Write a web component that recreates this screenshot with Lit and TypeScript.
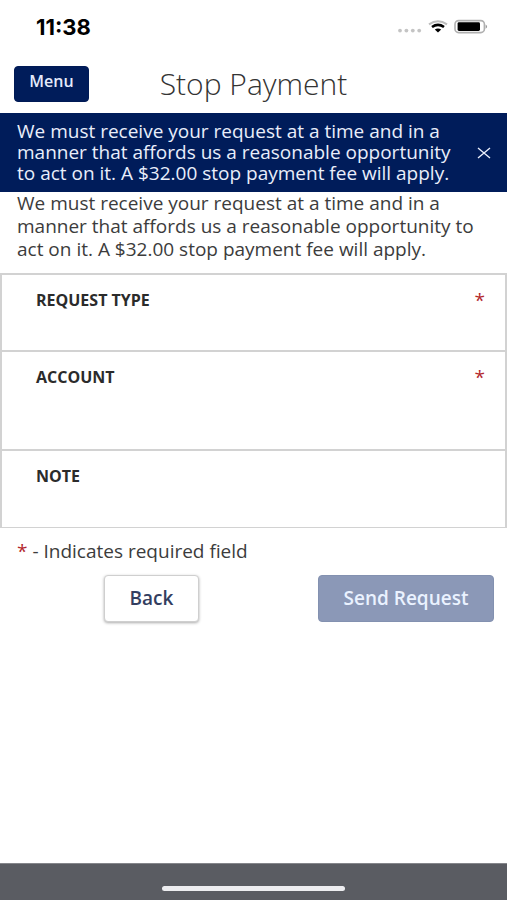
import { LitElement, html, css, nothing } from "lit";
import { customElement, property, state } from "lit/decorators.js";

@customElement("status-bar")
export class StatusBar extends LitElement {
  static styles = css`
    :host {
      display: flex;
      justify-content: space-between;
      align-items: center;
      height: 54px;
      padding: 0 18px 0 36px;
      box-sizing: border-box;
      color: #000;
    }
    .time {
      font: 700 22px/24px Inter, sans-serif;
    }
    .icons {
      display: flex;
      align-items: center;
    }
  `;

  render() {
    return html`
      <span class="time">11:38</span>
      <span class="icons">
        <svg width="92" height="18" viewBox="0 0 92 18" role="img" aria-label="Wi-Fi connected, battery full">
          <g fill="#c4c4c4">
            <circle cx="3" cy="12.6" r="1.9" />
            <circle cx="9.4" cy="12.6" r="1.9" />
            <circle cx="15.8" cy="12.6" r="1.9" />
            <circle cx="22.2" cy="12.6" r="1.9" />
          </g>
          <path d="M32 6.4 Q41 0 50 6.4" fill="none" stroke="#bdbdbd" stroke-width="2" />
          <path d="M35 9 Q41 4.6 47 9" fill="none" stroke="#000" stroke-width="2.6" />
          <path d="M37.8 11.6 Q41 9.6 44.2 11.6 L41 14.6 Z" fill="#000" />
          <rect x="58" y="2.6" width="29.4" height="12" rx="3.6" fill="#fff" stroke="#b0b0b0" stroke-width="1.6" />
          <rect x="60.6" y="4.2" width="22.4" height="8.8" rx="1.4" fill="#000" />
          <path d="M88.6 6.4 Q91.6 8.6 88.6 10.8 Z" fill="#999" />
        </svg>
      </span>
    `;
  }
}

@customElement("form-field")
export class FormField extends LitElement {
  @property() label = "";
  @property() name = "";
  @property({ type: Boolean }) required = false;

  static styles = css`
    :host {
      display: flex;
      flex-direction: column;
      padding: 13px 20px 8px 34px;
      box-sizing: border-box;
    }
    .head {
      display: flex;
      justify-content: space-between;
      align-items: center;
    }
    label {
      font-weight: 700;
      font-size: 16px;
      line-height: 24px;
      color: #2b2b2b;
      text-transform: uppercase;
    }
    .star {
      font-size: 19px;
      line-height: 24px;
      color: #b3282d;
    }
    input {
      flex: 1;
      min-height: 24px;
      border: 0;
      padding: 0;
      outline: 0;
      background: transparent;
      font: inherit;
      color: #333;
    }
  `;

  render() {
    return html`
      <div class="head">
        <label for="control">${this.label}</label>
        ${this.required ? html`<span class="star" aria-hidden="true">*</span>` : nothing}
      </div>
      <input id="control" type="text" name=${this.name} ?required=${this.required} />
    `;
  }
}

@customElement("app-root")
export class AppRoot extends LitElement {
  @state() private noticeOpen = true;

  static styles = css`
    :host {
      display: flex;
      flex-direction: column;
      min-height: 100vh;
      background: #fff;
      color: #3c3c3c;
      font-family: "Open Sans", "Noto Sans", sans-serif;
      font-size: 19px;
      line-height: 23px;
    }
    button {
      font: inherit;
      box-sizing: border-box;
      cursor: pointer;
    }
    .header {
      display: grid;
      grid-template-columns: 1fr auto 1fr;
      align-items: center;
      height: 59px;
      padding: 0 14px;
    }
    .menu {
      justify-self: start;
      width: 75px;
      height: 36px;
      padding: 0 0 4px;
      border: 1px solid #001a55;
      border-radius: 4px;
      background: #001c5a;
      color: #e4eafa;
      font-size: 16px;
      font-weight: 600;
    }
    h1 {
      margin: 0;
      font-size: 30px;
      line-height: 36px;
      font-weight: 300;
      color: #333;
    }
    .notice {
      display: flex;
      align-items: center;
      justify-content: space-between;
      gap: 16px;
      padding: 8px 14px 8px 17px;
      background: #001c5a;
      color: #e9eefb;
      line-height: 21px;
    }
    .notice p {
      margin: 0;
    }
    .close {
      display: flex;
      padding: 2px;
      border: 0;
      background: none;
      color: inherit;
    }
    .intro {
      margin: 0;
      padding: 0 17px;
    }
    .fields {
      margin-top: 12px;
      border: 2px solid #d2d2d2;
      border-bottom-width: 1px;
    }
    .fields form-field {
      min-height: 75px;
    }
    .fields form-field + form-field {
      min-height: 78px;
      border-top: 2px solid #d2d2d2;
    }
    .fields form-field + .tall {
      min-height: 99px;
    }
    .legend {
      margin: 12px 17px;
    }
    .star {
      color: #b3282d;
    }
    .actions {
      display: flex;
      justify-content: space-between;
      padding: 0 13px 0 104px;
    }
    .actions button {
      height: 47px;
      border-radius: 4px;
      font-weight: 600;
    }
    .back {
      width: 95px;
      border: 1px solid #cfcfcf;
      background: #fff;
      color: #333e60;
      box-shadow: 0 1px 3px #00000055;
    }
    .send {
      width: 176px;
      border: 1px solid #8391b0;
      background: #8b98b7;
      color: #eaf2ff;
    }
    .home {
      display: flex;
      justify-content: center;
      margin-top: auto;
      padding: 22px 0 9px;
      border-top: 1px solid #85868b;
      background: #5a5c62;
    }
    .bar {
      width: 36%;
      height: 5px;
      border-radius: 3px;
      background: #ededf0;
    }
  `;

  render() {
    const notice =
      "We must receive your request at a time and in a manner that affords us a reasonable opportunity to act on it. A $32.00 stop payment fee will apply.";
    return html`
      <status-bar></status-bar>
      <header class="header">
        <button class="menu" type="button">Menu</button>
        <h1>Stop Payment</h1>
      </header>
      ${this.noticeOpen
        ? html`<div class="notice" role="status">
            <p>${notice}</p>
            <button class="close" type="button" aria-label="Close" @click=${() => (this.noticeOpen = false)}>
              <svg width="14" height="14" viewBox="0 0 14 14" fill="none" stroke="currentColor" stroke-width="1.4">
                <path d="M1 2 L13 12 M13 2 L1 12" />
              </svg>
            </button>
          </div>`
        : nothing}
      <p class="intro">${notice}</p>
      <div class="fields">
        <form-field label="Request Type" name="requestType" required></form-field>
        <form-field class="tall" label="Account" name="account" required></form-field>
        <form-field label="Note" name="note"></form-field>
      </div>
      <p class="legend"><span class="star">*</span> - Indicates required field</p>
      <div class="actions">
        <button class="back" type="button">Back</button>
        <button class="send" type="button" disabled>Send Request</button>
      </div>
      <footer class="home"><div class="bar"></div></footer>
    `;
  }
}
